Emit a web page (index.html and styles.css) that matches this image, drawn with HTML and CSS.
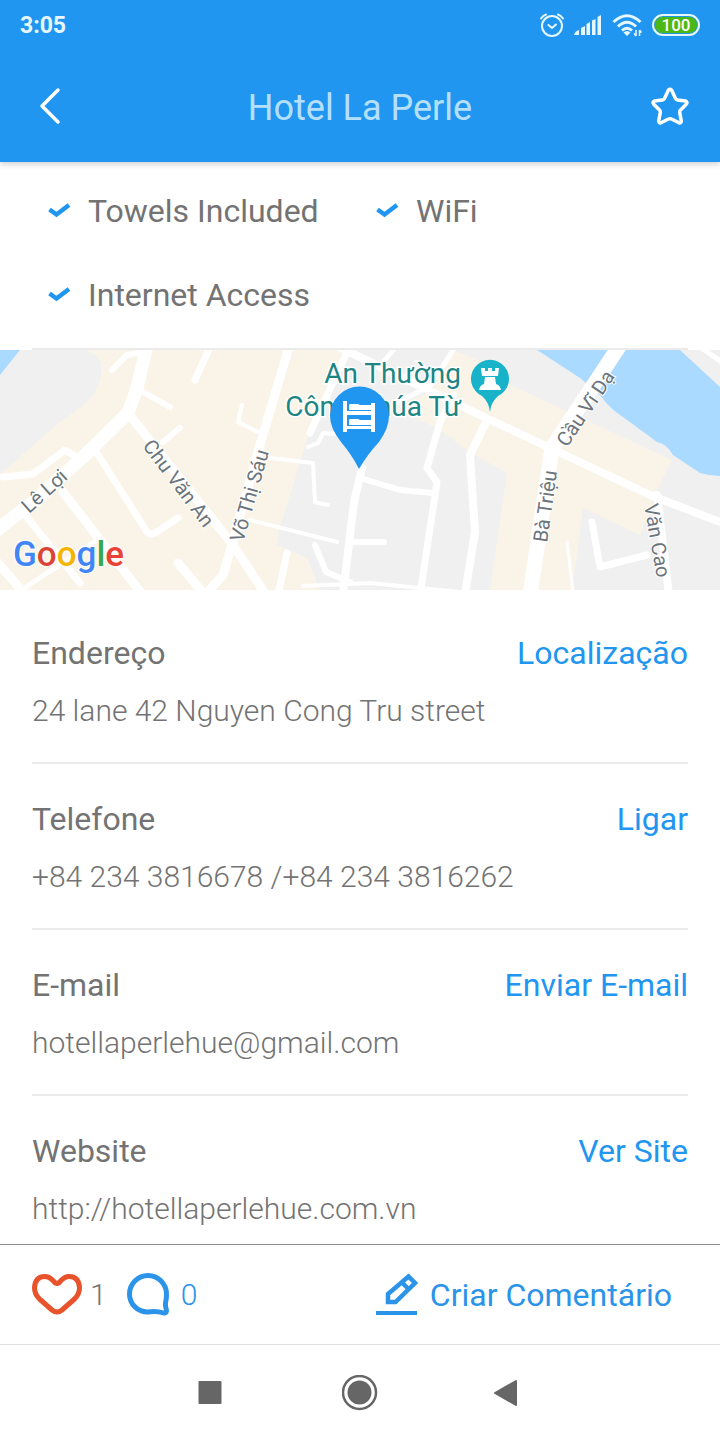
FILE: index.html
```html
<!DOCTYPE html>
<html lang="pt">
<head>
    <meta charset="UTF-8">
    <meta name="viewport" content="width=device-width, initial-scale=1.0">
    <title>Hotel La Perle</title>
    <link rel="stylesheet" href="styles.css">
</head>
<body>
    <header class="topbar">
        <div class="status">
            <span class="clock">3:05</span>
            <div class="status-icons">
                <!-- alarm -->
                <svg width="24" height="26" viewBox="0 0 24 26" fill="none" stroke="#e6f7ff" stroke-width="2" stroke-linecap="round">
                    <circle cx="12" cy="14" r="10"/>
                    <path d="M8.500 13l3.500 3 4-3.500M1 6.500Q3 3.500 6 2.500M23 6.500Q21 3.500 18 2.500"/>
                </svg>
                <!-- signal -->
                <svg width="28" height="22" viewBox="0 0 28 22" fill="#e6f7ff">
                    <path d="M0 21q1-4 5-5v5zM7 14l4-2v9H7zM12.500 10l3.500-2v13h-3.500zM18 6.500L21.500 5v16H18zM23.500 3L27 1v20h-3.500z"/>
                </svg>
                <!-- wifi -->
                <svg width="30" height="24" viewBox="0 0 30 24" fill="none" stroke="#e6f7ff" stroke-width="3">
                    <path d="M1.500 9Q15-3.500 28.500 9M6 13.500Q15 5 24 13.500M10 17.500Q15 13 20 17.500"/>
                    <path d="M11.500 19.500q3.500-3 7 0L15 23z" fill="#e6f7ff" stroke="none"/>
                    <path d="M24 17v6M27.500 17v6M22 20.500l2 2.500M29.500 19.500l-2-2.500" stroke-width="1.500"/>
                </svg>
                <span class="battery">100</span>
            </div>
        </div>
        <div class="title-row">
            <button class="icon-btn" aria-label="Voltar">
                <svg width="22" height="38" viewBox="0 0 22 38" fill="none" stroke="#fff" stroke-width="3.500" stroke-linecap="round" stroke-linejoin="round">
                    <path d="M19 3L3 19l16 16"/>
                </svg>
            </button>
            <h1>Hotel La Perle</h1>
            <button class="icon-btn" aria-label="Favorito">
                <svg width="38" height="38" viewBox="0 0 38 38" fill="none" stroke="#fff" stroke-width="3.500" stroke-linejoin="round">
                    <path d="M17.300 3.200q1.700-1.800 3.400 0L24.500 11.500q.6 1.200 2 1.400l8.200 1.200q2 1 .8 2.800L29.500 23q-1 1-.8 2.400l1.600 8.600q-.2 2.400-2.300 1.800L20.500 32q-1.500-.6-3 0L10 35.800q-2.100.6-2.300-1.800l1.600-8.600q.2-1.400-.8-2.400L2.500 16.900q-1.200-1.800.8-2.800l8.200-1.200q1.400-.2 2-1.400z"/>
                </svg>
            </button>
        </div>
    </header>

    <main>
        <ul class="features">
            <li>
                <svg width="24" height="16" viewBox="0 0 24 16" fill="none" stroke="#2196f0" stroke-width="4.500"><path d="M1.500 6.500l7 5L21 2"/></svg>
                Towels Included
            </li>
            <li>
                <svg width="24" height="16" viewBox="0 0 24 16" fill="none" stroke="#2196f0" stroke-width="4.500"><path d="M1.500 6.500l7 5L21 2"/></svg>
                WiFi
            </li>
            <li>
                <svg width="24" height="16" viewBox="0 0 24 16" fill="none" stroke="#2196f0" stroke-width="4.500"><path d="M1.500 6.500l7 5L21 2"/></svg>
                Internet Access
            </li>
        </ul>

        <svg class="map" viewBox="0 0 720 240" preserveAspectRatio="xMidYMid slice">
            <rect width="720" height="240" fill="#faf4e8"/>
            <!-- blocks -->
            <g fill="#f0f0f0">
                <path d="M20 0h66q14 6 15 14v12q-4 18-16 28L55 76 5 120l-5 4V0z"/>
                <path d="M350 0h103l-20 40-40 18 44 20 33 24 37 21-17 117H320l-13-32-30-13 3-18 27-87z"/>
                <path d="M453 0h267v240H572l11-82 57 27 18-47 14-28-82-38-80-37-25-22z"/>
            </g>
            <!-- water -->
            <path d="M0 0h20L0 25zM537 0l43 28 20 17q10 14 23 22l34 25q10 2 16 13l27 18q10 3 20 3V37L680 0z" fill="#aadaff"/>
            <!-- roads -->
            <g class="roads">
                <path d="M147-4l-10 42-9 25-45 44-50 45-37 29" stroke-width="13"/>
                <path d="M128 63l105 132 33 50" stroke-width="9"/>
                <path d="M112 20l15-15 18-3M143 42l27 15M180 78l-17 14M353 192h31M360 128l40 12 33 3M315 195l11 27 24 10" stroke-width="6"/>
                <path d="M210-3l-15 33M3 127l30-3 32-24 13 8M97 103l50 79q4 4 8 1l23-15M25 165l55 68M347 2l-37 81M440 72l-13 46 10 14-17 113M287 203l-9 42" stroke-width="7"/>
                <path d="M63 142l79 102M-3 212l28 32M178 213l25 30M232 195l-9 30-18 20M289-3l-32 108-25 90" stroke-width="9"/>
                <path d="M20 241l77-51M700-3l22 15" stroke-width="5"/>
                <path d="M242 55l-4 17 20 10M270 108l43 5 2 39 13 3M308 97l10-4 5-10 14 1M250 170l87 22M303 236l67-3 110 11" stroke-width="4"/>
                <path d="M335-5l145 70 70 33 100 47 75 29M487 70l-17 35 5 77-10 62M362 118l-8 34-11 92M657 145l12 100" stroke-width="8"/>
                <path d="M455-3l-24 38-38 20M395-2l-10 12" stroke-width="5"/>
                <path d="M440 72l14-27" stroke-width="7"/>
                <path d="M620-5l-68 103-22 147" stroke-width="15"/>
                <path d="M592 172l8 45 47-12" stroke-width="7"/>
                <path d="M567 192l6 50" stroke-width="3"/>
            </g>
            <!-- street names -->
            <g class="street">
                <text transform="translate(29 164) rotate(-42)">Lê Lợi</text>
                <text transform="translate(142 96) rotate(53)">Chu Văn An</text>
                <text transform="translate(243 193) rotate(-74)">Võ Thị Sáu</text>
                <text transform="translate(567 98) rotate(-56)">Cầu Vĩ Dạ</text>
                <text transform="translate(547 193) rotate(-82)">Bà Triệu</text>
                <text transform="translate(644 155) rotate(80)">Văn Cao</text>
            </g>
            <text class="place" x="461" y="33">An Thường</text>
            <text class="place" x="461" y="66">Công Chúa Từ</text>
            <!-- castle pin -->
            <path d="M490 62q-1-10-8-16a19 19 0 1 1 16 0q-7 6-8 16z" fill="#18b3c8"/>
            <path d="M481 18h4v3h3v-3h4v3h3v-3h4l-1 8h-16zM485 27h10l1 7q4 1 5 6h-22q1-5 5-6z" fill="#fff"/>
            <!-- hotel pin -->
            <path d="M359 119q-7-14-18-27Q330 78 330 66a29.500 29.500 0 0 1 59 0q0 12-10 26-12 13-20 27z" fill="#2196f0"/>
            <path d="M343 51h4v31h-4zM371 53h4v29h-4zM346 61h26v4h-26zM346 76h26v3h-26z" fill="#fff"/>
            <path d="M349 55q0-1 2-1h7l2 1h11v5h-22zM349 70q0-1 2-1h7l2 1h11v5h-22z" fill="#fff"/>
            <text class="google" x="13" y="216"><tspan fill="#4285f4">G</tspan><tspan fill="#db4437">o</tspan><tspan fill="#f4b400">o</tspan><tspan fill="#4285f4">g</tspan><tspan fill="#34a853">l</tspan><tspan fill="#ea4335">e</tspan></text>
        </svg>

        <div class="details">
            <section class="detail">
                <div class="detail-head">
                    <h2>Endereço</h2>
                    <a href="#localizacao">Localização</a>
                </div>
                <p>24 lane 42 Nguyen Cong Tru street</p>
            </section>
            <section class="detail">
                <div class="detail-head">
                    <h2>Telefone</h2>
                    <a href="tel:+842343816678">Ligar</a>
                </div>
                <p>+84 234 3816678 /+84 234 3816262</p>
            </section>
            <section class="detail">
                <div class="detail-head">
                    <h2>E-mail</h2>
                    <a href="mailto:hotellaperlehue@gmail.com">Enviar E-mail</a>
                </div>
                <p>hotellaperlehue@gmail.com</p>
            </section>
            <section class="detail">
                <div class="detail-head">
                    <h2>Website</h2>
                    <a href="http://hotellaperlehue.com.vn">Ver Site</a>
                </div>
                <p>http://hotellaperlehue.com.vn</p>
            </section>
        </div>
    </main>

    <footer class="actions">
        <button class="count likes">
            <svg width="50" height="42" viewBox="0 0 50 42" fill="none" stroke="#e8532b" stroke-width="5" stroke-linejoin="round">
                <path d="M25 9.500Q27.500 9 29.500 6 33 2.500 37 2.500q10 0 10.500 11.500 0 6-5 11L30 36q-5 4-10 0L7.500 25q-5-5-5-11Q3 2.500 13 2.500q4 0 7.500 3.500 2 3 4.500 3.500z"/>
            </svg>
            1
        </button>
        <button class="count comments">
            <svg width="42" height="42" viewBox="0 0 42 42" fill="none" stroke="#2b93e8" stroke-width="5" stroke-linejoin="round">
                <path d="M21 1.500A18.500 18.500 0 0 1 39.500 20q0 5-1 9-.5 3 1 7.500 0 3-3 2.500Q29 36.500 21 38A18 18 0 0 1 2.500 20 18.500 18.500 0 0 1 21 1.500z"/>
            </svg>
            0
        </button>
        <button class="write">
            <svg width="42" height="42" viewBox="0 0 42 42" fill="none" stroke="#2b93e8" stroke-width="4">
                <path d="M0 39h41"/>
                <path d="M12 28v-8L32.500 2.500 39 9 19.500 28zM26 8.500l7 7" stroke-width="4.500"/>
            </svg>
            Criar Comentário
        </button>
    </footer>

    <nav class="android-nav">
        <button aria-label="Recentes"><svg width="36" height="36" viewBox="0 0 36 36"><rect x="4.500" y="6" width="23" height="23" rx="1" fill="#666"/></svg></button>
        <button aria-label="Início"><svg width="36" height="36" viewBox="0 0 36 36"><circle cx="17.500" cy="17.500" r="16.500" fill="none" stroke="#666" stroke-width="2.500"/><circle cx="17.500" cy="17.500" r="12" fill="#666"/></svg></button>
        <button aria-label="Voltar"><svg width="36" height="36" viewBox="0 0 36 36"><path d="M5 18L26 6v24z" fill="#666" stroke="#666" stroke-width="2" stroke-linejoin="round"/></svg></button>
    </nav>
</body>
</html>
```
FILE: styles.css
```css
* {
    box-sizing: border-box;
}
body {
    margin: 0;
    height: 100vh;
    display: flex;
    flex-direction: column;
    font-family: Roboto, "Liberation Sans", sans-serif;
    font-size: 32px;
    line-height: 38px;
    color: #737373;
    background-color: #fff;
}
button {
    display: flex;
    align-items: center;
    padding: 0;
    border: none;
    background: none;
    font: inherit;
    color: inherit;
    cursor: pointer;
}
svg {
    display: block;
    flex: none;
}
h1, h2, p, ul {
    margin: 0;
    padding: 0;
    font-weight: 400;
}

/* header */
.topbar {
    flex: none;
    background-color: #2196f0;
    box-shadow: 0 2px 6px rgba(0, 0, 0, 0.2);
    z-index: 1;
}
.status {
    height: 50px;
    padding: 0 20px;
    display: flex;
    align-items: center;
    justify-content: space-between;
    color: #e6f7ff;
}
.clock {
    padding-top: 2px;
    font-size: 23px;
    font-weight: 700;
}
.status-icons {
    display: flex;
    align-items: center;
    gap: 10px;
}
.battery {
    width: 48px;
    height: 22px;
    border: 2px solid #e6f7ff;
    border-radius: 11px;
    background-color: #4cb816;
    box-shadow: inset 0 0 0 1px #2196f0;
    color: #fff;
    font-size: 17px;
    font-weight: 500;
    line-height: 18px;
    text-align: center;
}
.title-row {
    height: 112px;
    padding: 0 31px;
    display: flex;
    align-items: center;
    justify-content: space-between;
}
.title-row h1 {
    flex: 1;
    padding-top: 4px;
    font-size: 36px;
    text-align: center;
    color: #b5e0fc;
}
.icon-btn {
    width: 38px;
    justify-content: center;
}

/* content */
main {
    flex: 1;
    min-height: 0;
    overflow-y: auto;
    scrollbar-width: none;
}
.features {
    margin: 0 32px;
    padding: 30px 0 34px;
    display: grid;
    grid-template-columns: 1fr 1fr;
    row-gap: 46px;
    border-bottom: 2px solid #ebebeb;
    list-style: none;
}
.features li {
    padding-left: 16px;
    display: flex;
    align-items: center;
    gap: 16px;
}
.map {
    width: 100%;
    height: 240px;
}
.roads {
    fill: none;
    stroke: #fff;
    stroke-linecap: round;
    stroke-linejoin: round;
}
.street {
    font-size: 20px;
    fill: #6b747b;
    stroke: #fff;
    stroke-width: 2px;
    paint-order: stroke;
}
.place {
    font-size: 28px;
    text-anchor: end;
    fill: #1d8583;
    stroke: #fff;
    stroke-width: 3px;
    paint-order: stroke;
}
.google {
    font-size: 35px;
    font-weight: 500;
    stroke: #fff;
    stroke-width: 2px;
    paint-order: stroke;
}
.details {
    padding: 8px 32px 0;
}
.detail {
    padding: 36px 0 32px;
    border-bottom: 2px solid #ebebeb;
}
.detail-head {
    margin-bottom: 20px;
    display: flex;
    justify-content: space-between;
}
.detail h2 {
    font-size: 32px;
}
.detail a {
    color: #2196f0;
    text-decoration: none;
}
.detail p {
    font-size: 30px;
    font-weight: 300;
}

/* bottom bars */
.actions {
    flex: none;
    height: 100px;
    padding: 0 48px 0 32px;
    display: flex;
    align-items: center;
    border-top: 1px solid #8c8c8c;
    background-color: #fff;
}
.count {
    gap: 8px;
    font-size: 30px;
    font-weight: 300;
}
.comments {
    margin-left: 20px;
    gap: 12px;
    color: #2b93e8;
}
.comments svg,
.likes svg {
    overflow: visible;
}
.write {
    margin-left: auto;
    gap: 12px;
    color: #2b93e8;
}
.android-nav {
    flex: none;
    height: 96px;
    display: flex;
    align-items: center;
    justify-content: center;
    gap: 112px;
    border-top: 1px solid #e0e0e0;
}
```
